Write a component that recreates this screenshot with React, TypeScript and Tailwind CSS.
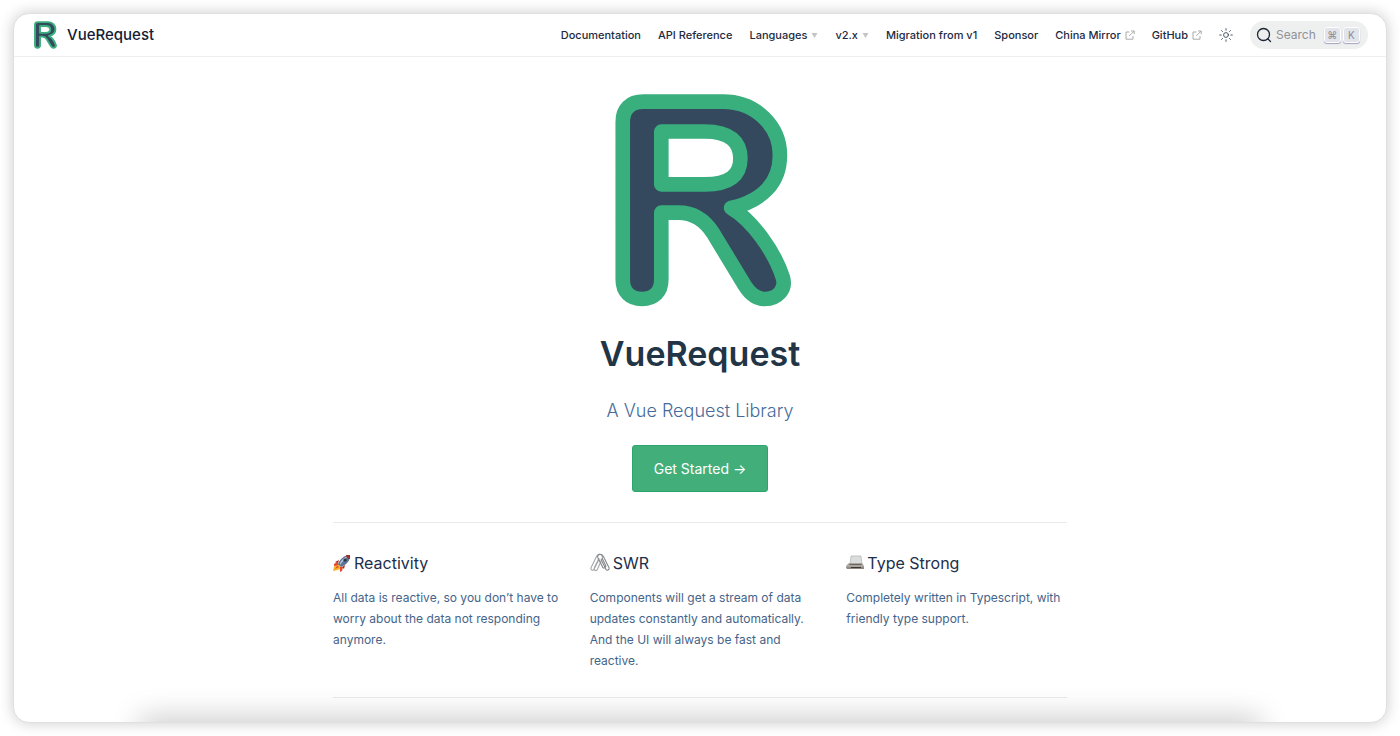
import type { ReactNode } from "react";

const features = [
  {
    icon: <RocketIcon />,
    title: "Reactivity",
    details: "All data is reactive, so you don’t have to worry about the data not responding anymore.",
  },
  {
    icon: <ClipsIcon />,
    title: "SWR",
    details:
      "Components will get a stream of data updates constantly and automatically. And the UI will always be fast and reactive.",
  },
  {
    icon: <PrinterIcon />,
    title: "Type Strong",
    details: "Completely written in Typescript, with friendly type support.",
  },
];

function Logo({ className }: { className: string }) {
  return (
    <svg className={className} viewBox="75 41 532 641" aria-hidden="true">
      <path
        fill="#34495e"
        fillRule="evenodd"
        stroke="#3aaf7e"
        strokeWidth="44"
        strokeLinejoin="round"
        d="M98 125C98 86 120 64 160 64H400C500 64 571 140 571 225C571 310 515 363 424 384C487 420 555 515 580 594C590 628 565 658 525 658C500 658 480 641 465 617L370 460C340 413 305 398 265 398H214V600C214 636 192 658 156 658C120 658 98 636 98 600ZM214 154H345C420 154 452 185 452 235C452 285 420 313 345 313H214Z"
      />
    </svg>
  );
}

function RocketIcon() {
  return (
    <svg className="size-[18px]" viewBox="0 0 18 18" aria-hidden="true">
      <path fill="#f7b52c" d="M5 10C2 10 1 12 0 17C4 16 8 16 8 13Z" />
      <path fill="#e8472b" d="M4 8L1 10L1 12L6 11ZM10 13L9 17L7 18L7 13ZM4 12L2 15L6 13Z" />
      <path fill="#5d7390" d="M5 10C7 5 11 1 17 1C18 6 13 11 8 13Z" />
      <path fill="#b9c9da" d="M7 9C9 5 12 3 15 2C12 5 9 8 7 11Z" />
      <path fill="#a52c2b" d="M13 1L17 1L17 5C15 5 13 3 13 1ZM6 6L2 8L5 9ZM12 11L11 15L9 13Z" />
      <circle cx="12" cy="6" r="1.6" fill="#26334a" />
    </svg>
  );
}

function ClipsIcon() {
  return (
    <svg
      className="size-5"
      viewBox="0 0 18 18"
      fill="none"
      stroke="#a3a6a8"
      strokeLinecap="round"
      aria-hidden="true"
    >
      <path d="M8 6L4 14C3 17 0 15 1 13L6 3C8 0 12 1 11 5L7 14C6 17 3 16 4 13L8 5" />
      <path stroke="#85898b" d="M10 6L14 14C15 17 18 15 17 13L12 3C10 0 6 1 7 4L11 12C12 15 15 13 14 11L11 5" />
    </svg>
  );
}

function PrinterIcon() {
  return (
    <svg className="size-[18px]" viewBox="0 0 18 18" aria-hidden="true">
      <path fill="#d9dddc" stroke="#a8aaa8" strokeWidth=".6" d="M5 2H15L16 10H4Z" />
      <path fill="#aaa69d" d="M3 9H16L18 12V15H1L0 12Z" />
      <path fill="#6a6762" d="M4 10H15L16 11H3Z" />
      <path fill="#8d8981" d="M0 13H18V15H1Z" />
      <path fill="#393734" d="M5 13H15V14H5Z" />
    </svg>
  );
}

function ExternalIcon() {
  return (
    <svg
      className="ml-1 size-[10px]"
      viewBox="0 0 10 10"
      fill="none"
      stroke="#aaa"
      aria-hidden="true"
    >
      <path d="M4.5 2H1V9.2H8V6M6 1H9.2V4.2M9 1.2L4.2 6" />
    </svg>
  );
}

function SunIcon() {
  return (
    <svg
      className="size-[14px]"
      viewBox="0 0 14 14"
      fill="none"
      stroke="#4b5a6c"
      strokeLinecap="round"
      aria-hidden="true"
    >
      <circle cx="7" cy="7" r="2.4" />
      <path d="M7 .7V2.2M7 11.8V13.3M.7 7H2.2M11.8 7H13.3M2.5 2.5L3.5 3.5M10.5 10.5L11.5 11.5M2.5 11.5L3.5 10.5M10.5 3.5L11.5 2.5" />
    </svg>
  );
}

function NavLink({ children, external }: { children: ReactNode; external?: boolean }) {
  return (
    <a href="#" className="flex items-center">
      {children}
      {external && <ExternalIcon />}
    </a>
  );
}

function NavMenu({ children }: { children: ReactNode }) {
  return (
    <button type="button" className="flex items-center gap-1">
      {children}
      <svg className="h-[5px] w-[7px]" viewBox="0 0 7 5" fill="#c4c4c4" aria-hidden="true">
        <path d="M.5 0H6.5L3.5 5Z" />
      </svg>
    </button>
  );
}

function Key({ children }: { children: ReactNode }) {
  return (
    <kbd className="flex h-4 w-[17px] items-center justify-center rounded-[3px] border border-white bg-[#e2e4ec] font-[Inter,sans-serif] text-[10px] text-[#8a8d96] shadow-[0_1px_1px_0px_#a5a5c5]">
      {children}
    </kbd>
  );
}

export default function App() {
  return (
    <div className="flex min-h-screen bg-white p-[13px] font-[Inter,sans-serif] text-[#213547]">
      <div className="relative flex-1 overflow-hidden rounded-2xl border border-[#e0e0e0] bg-white shadow-[0_0_14px_1px_rgba(0,0,0,0.18)]">
        <header className="flex h-[43px] items-center justify-between border-b border-[#eeeeee] pr-[18px] pl-5">
          <a href="#" className="flex items-center gap-[10px] text-[15px] font-medium text-[#142036]">
            <Logo className="h-7 w-[23px]" />
            VueRequest
          </a>
          <nav className="flex items-center gap-[17px] text-[11px] font-medium text-[#1d2b3f]">
            <NavLink>Documentation</NavLink>
            <NavLink>API Reference</NavLink>
            <NavMenu>Languages</NavMenu>
            <NavMenu>v2.x</NavMenu>
            <NavLink>Migration from v1</NavLink>
            <NavLink>Sponsor</NavLink>
            <NavLink external>China Mirror</NavLink>
            <NavLink external>GitHub</NavLink>
            <button type="button" aria-label="Toggle dark mode">
              <SunIcon />
            </button>
            <button
              type="button"
              className="flex h-7 w-[118px] items-center rounded-full bg-[#eeefef] pl-[6px] text-[12px] font-normal text-[#8f9296]"
            >
              <svg
                className="mr-1 size-4"
                viewBox="0 0 16 16"
                fill="none"
                stroke="#1c2536"
                strokeWidth="1.3"
                strokeLinecap="round"
                aria-hidden="true"
              >
                <circle cx="7.5" cy="7.5" r="6" />
                <path d="M12 12L14.5 14.5" />
              </svg>
              Search
              <span className="ml-2 flex gap-[2px]">
                <Key>⌘</Key>
                <Key>K</Key>
              </span>
            </button>
          </nav>
        </header>

        <main className="mx-auto max-w-[734px]">
          <section className="flex flex-col items-center pt-[37px]">
            <Logo className="ml-[6px] h-[213px] w-[177px]" />
            <h1 className="mt-6 text-[34px] leading-[46px] font-semibold">VueRequest</h1>
            <p className="mt-5 text-[18px] leading-7 font-light text-[#456b9a]">
              A Vue Request Library
            </p>
            <a
              href="#"
              className="mt-5 flex h-[47px] items-center rounded-[3px] border border-[#2ba56e] bg-[#42af7b] px-[21px] text-[14px] text-white"
            >
              Get Started →
            </a>
          </section>

          <section className="mt-[30px] border-y border-[#e8eaed] pt-7 pb-[26px]">
            <div className="-mr-3 grid grid-cols-3 gap-6">
              {features.map((feature) => (
                <div key={feature.title}>
                  <h2 className="flex items-center gap-[3px] text-[16px] leading-6 text-[#1c2f4c]">
                    {feature.icon}
                    {feature.title}
                  </h2>
                  <p className="mt-3 text-[12px] leading-[21px] text-[#456489]">{feature.details}</p>
                </div>
              ))}
            </div>
          </section>
        </main>

        <div className="absolute inset-x-[130px] -bottom-5 h-5 shadow-[0_0_30px_4px_rgba(0,0,0,0.22)]" />
      </div>
    </div>
  );
}
